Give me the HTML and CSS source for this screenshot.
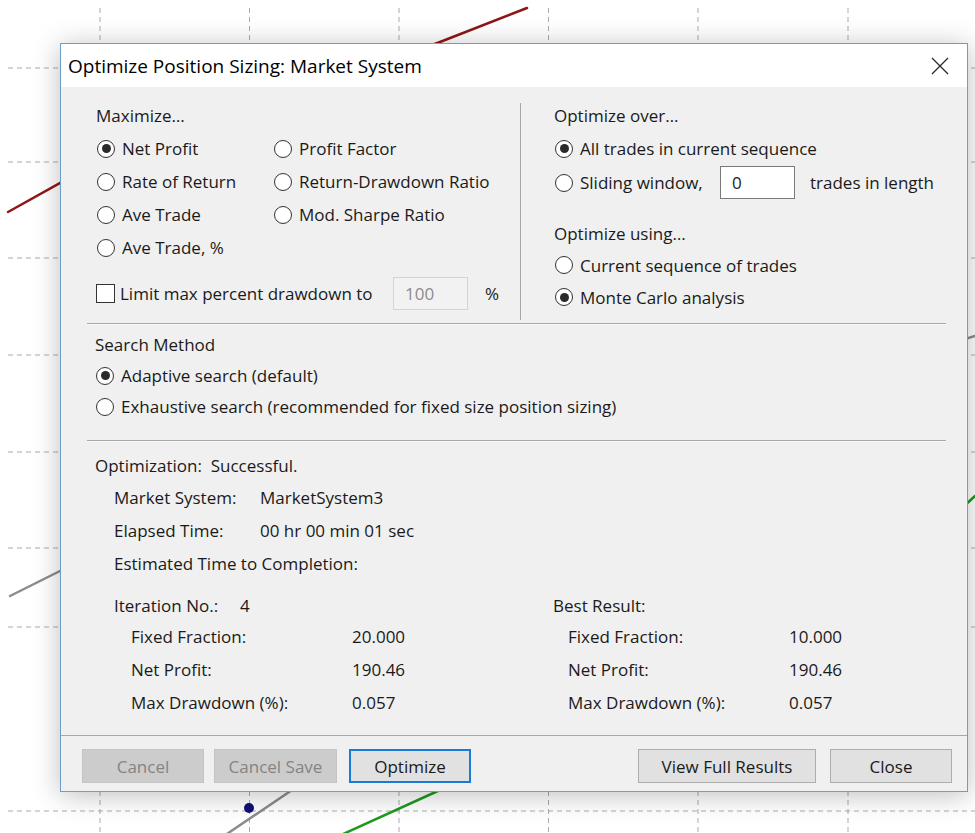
FILE: index.html
```html
<!DOCTYPE html>
<html lang="en">
<head>
<meta charset="utf-8">
<title>Optimize Position Sizing</title>
<link rel="stylesheet" href="styles.css">
</head>
<body>
<div class="desk">
  <!-- equity chart behind the dialog -->
  <svg class="chart" width="975" height="833" viewBox="0 0 975 833">
    <g class="grid">
      <line x1="100" y1="8" x2="100" y2="833"/>
      <line x1="249.5" y1="8" x2="249.5" y2="833"/>
      <line x1="399" y1="8" x2="399" y2="833"/>
      <line x1="548.5" y1="8" x2="548.5" y2="833"/>
      <line x1="698" y1="8" x2="698" y2="833"/>
      <line x1="848" y1="8" x2="848" y2="833"/>
      <line x1="8" y1="68" x2="975" y2="68"/>
      <line x1="8" y1="162" x2="975" y2="162"/>
      <line x1="8" y1="258" x2="975" y2="258"/>
      <line x1="8" y1="355" x2="975" y2="355"/>
      <line x1="8" y1="452" x2="975" y2="452"/>
      <line x1="8" y1="548" x2="975" y2="548"/>
      <line x1="8" y1="627" x2="975" y2="627"/>
      <line x1="8" y1="811" x2="975" y2="811"/>
    </g>
    <polyline class="series red" points="8,212 62,182 440,42 527,8"/>
    <polyline class="series gray" points="10,596 62,570"/>
    <polyline class="series gray" points="218,840 292,790"/>
    <polyline class="series gray" points="962,345 968,338 975,336"/>
    <polyline class="series green" points="330,840 440,790"/>
    <polyline class="series green" points="962,508 975,496"/>
    <circle class="marker" cx="249" cy="808" r="5"/>
  </svg>

  <section class="dialog">
    <header class="titlebar">
      <span class="title">Optimize Position Sizing: Market System</span>
      <svg class="close" width="18" height="18" viewBox="0 0 18 18">
        <path d="M1 1 L17 17 M17 1 L1 17"/>
      </svg>
    </header>

    <div class="content">
      <div class="top">
        <div class="col-left">
          <div class="group-label">Maximize…</div>
          <div class="radio-grid">
            <label class="opt"><span class="radio on"></span>Net Profit</label>
            <label class="opt"><span class="radio"></span>Profit Factor</label>
            <label class="opt"><span class="radio"></span>Rate of Return</label>
            <label class="opt"><span class="radio"></span>Return-Drawdown Ratio</label>
            <label class="opt"><span class="radio"></span>Ave Trade</label>
            <label class="opt"><span class="radio"></span>Mod. Sharpe Ratio</label>
            <label class="opt"><span class="radio"></span>Ave Trade, %</label>
          </div>
          <div class="limit-row">
            <label class="opt limit-label"><span class="check"></span>Limit max percent drawdown to</label>
            <span class="field disabled">100</span>
            <span class="pct">%</span>
          </div>
        </div>

        <div class="vsep"></div>

        <div class="col-right">
          <div class="group-label">Optimize over…</div>
          <label class="opt row-a"><span class="radio on"></span>All trades in current sequence</label>
          <div class="opt row-b">
            <span class="radio"></span>
            <span class="slide-label">Sliding window,</span>
            <span class="field">0</span>
            <span class="after-field">trades in length</span>
          </div>
          <div class="group-label using">Optimize using…</div>
          <label class="opt row-c"><span class="radio"></span>Current sequence of trades</label>
          <label class="opt row-c"><span class="radio on"></span>Monte Carlo analysis</label>
        </div>
      </div>

      <div class="sep"></div>

      <div class="search">
        <div class="group-label">Search Method</div>
        <label class="opt"><span class="radio on"></span>Adaptive search (default)</label>
        <label class="opt"><span class="radio"></span>Exhaustive search (recommended for fixed size position sizing)</label>
      </div>

      <div class="sep"></div>

      <div class="status">
        <div class="status-line">Optimization:&nbsp; Successful.</div>
        <div class="info">
          <div class="info-row"><span>Market System:</span><span>MarketSystem3</span></div>
          <div class="info-row"><span>Elapsed Time:</span><span>00 hr 00 min 01 sec</span></div>
          <div class="info-row"><span>Estimated Time to Completion:</span></div>
        </div>
        <div class="results">
          <div class="result-block">
            <div class="block-head iter"><span>Iteration No.:</span><span>4</span></div>
            <div class="kv"><span>Fixed Fraction:</span><span>20.000</span></div>
            <div class="kv"><span>Net Profit:</span><span>190.46</span></div>
            <div class="kv"><span>Max Drawdown (%):</span><span>0.057</span></div>
          </div>
          <div class="result-block best">
            <div class="block-head"><span>Best Result:</span></div>
            <div class="kv"><span>Fixed Fraction:</span><span>10.000</span></div>
            <div class="kv"><span>Net Profit:</span><span>190.46</span></div>
            <div class="kv"><span>Max Drawdown (%):</span><span>0.057</span></div>
          </div>
        </div>
      </div>
    </div>

    <footer class="footer">
      <div class="btn-group">
        <button class="btn" disabled>Cancel</button>
        <button class="btn save" disabled>Cancel Save</button>
        <button class="btn default">Optimize</button>
      </div>
      <div class="btn-group right">
        <button class="btn wide">View Full Results</button>
        <button class="btn close-btn">Close</button>
      </div>
    </footer>
  </section>
</div>
</body>
</html>
```

FILE: styles.css
```css
html, body {
  margin: 0;
  padding: 0;
  background: #fff;
}

.desk {
  position: relative;
  width: 975px;
  height: 833px;
  overflow: hidden;
  background: #fff;
  font-family: "Open Sans", "Noto Sans", sans-serif;
  font-size: 17px;
  color: #1a1a1a;
}

/* chart canvas */
.chart {
  position: absolute;
  left: 0;
  top: 0;
}

.grid line {
  stroke: #ababab;
  stroke-width: 1;
  stroke-dasharray: 5 4;
}

.series {
  fill: none;
  stroke-width: 2.5;
  stroke-linecap: round;
}

.series.red { stroke: #8e1616; }
.series.gray { stroke: #8c8c8c; }
.series.green { stroke: #1e9a1e; }

.marker { fill: #10107a; }

/* dialog window */
.dialog {
  position: absolute;
  left: 60px;
  top: 43px;
  width: 908px;
  height: 749px;
  box-sizing: border-box;
  border: 1px solid #6c9dcb;
  background: #f0f0f0;
  box-shadow: 0 3px 26px rgba(0, 0, 0, 0.26);
  display: flex;
  flex-direction: column;
}

.titlebar {
  height: 43px;
  flex: none;
  background: #fff;
  display: flex;
  align-items: center;
  justify-content: space-between;
  padding: 0 18px 0 7px;
}

.title {
  font-size: 19px;
  color: #000;
  padding-top: 1px;
}

.close path {
  stroke: #2b2b2b;
  stroke-width: 1.3;
  fill: none;
}

.content {
  flex: 1;
  min-height: 0;
  display: flex;
  flex-direction: column;
  padding: 0 21px 0 26px;
}

.group-label {
  height: 33px;
  display: flex;
  align-items: center;
}

.opt {
  display: flex;
  align-items: center;
  gap: 7px;
  white-space: nowrap;
}

.radio {
  flex: none;
  width: 18px;
  height: 18px;
  box-sizing: border-box;
  border: 1.5px solid #333;
  border-radius: 50%;
  background: #fff;
  display: grid;
  place-items: center;
  margin-left: 1px;
}

.radio.on::after {
  content: "";
  width: 9px;
  height: 9px;
  border-radius: 50%;
  background: #2a2a2a;
}

.check {
  flex: none;
  width: 19px;
  height: 19px;
  box-sizing: border-box;
  border: 1.5px solid #333;
  background: #fff;
  margin-right: -1px;
}

.field {
  box-sizing: border-box;
  width: 75px;
  height: 33px;
  border: 1px solid #7a7a7a;
  background: #fff;
  display: flex;
  align-items: center;
  padding-left: 11px;
  flex: none;
}

.field.disabled {
  border-color: #d4d4d4;
  background: #f2f2f2;
  color: #8c8c8c;
}

/* upper options area */
.top {
  height: 236px;
  flex: none;
  display: grid;
  grid-template-columns: 433px 1px 1fr;
}

.col-left {
  padding: 12px 0 0 9px;
}

.radio-grid {
  display: grid;
  grid-template-columns: 177px auto;
  grid-auto-rows: 33px;
}

.limit-row {
  margin-top: 13px;
  height: 33px;
  display: flex;
  align-items: center;
}

.limit-label {
  width: 297px;
  gap: 6px;
}

.pct {
  margin-left: 17px;
}

.vsep {
  margin: 16px 0 3px;
  background: #a8a8a8;
}

.col-right {
  padding: 12px 0 0 33px;
}

.row-a { height: 33px; }

.row-b { height: 35px; }

.slide-label { width: 133px; }

.after-field { margin-left: 8px; }

.using {
  margin-top: 17px;
  height: 32px;
}

.row-c { height: 32px; }

.sep {
  flex: none;
  height: 1px;
  background: #a8a8a8;
  border-bottom: 1px solid #fafafa;
}

/* search method */
.search {
  padding: 3px 0 18px 8px;
}

.search .group-label { height: 32px; }

.search .opt { height: 31px; }

/* status area */
.status {
  flex: 1;
  padding: 7px 0 0 8px;
  white-space: nowrap;
}

.status-line {
  height: 32px;
  display: flex;
  align-items: center;
}

.info {
  padding-left: 19px;
}

.info-row {
  height: 33px;
  display: grid;
  grid-template-columns: 146px auto;
  align-items: center;
}

.results {
  margin-top: 10px;
  padding-left: 19px;
  display: grid;
  grid-template-columns: 439px auto;
}

.block-head {
  height: 30px;
  display: flex;
  align-items: center;
}

.block-head.iter {
  display: grid;
  grid-template-columns: 126px auto;
}

.kv {
  height: 33px;
  display: grid;
  grid-template-columns: 221px auto;
  align-items: center;
  padding-left: 17px;
}

.best .kv { padding-left: 15px; }

/* bottom button bar */
.footer {
  flex: none;
  box-sizing: border-box;
  height: 56px;
  border-top: 1px solid #a8a8a8;
  display: flex;
  justify-content: space-between;
  align-items: flex-start;
  padding: 13px 15px 0 21px;
}

.btn-group {
  display: flex;
  gap: 10px;
}

.btn-group.right { gap: 14px; }

.btn {
  box-sizing: border-box;
  width: 122px;
  height: 34px;
  font: inherit;
  color: #1a1a1a;
  background: #e1e1e1;
  border: 1px solid #adadad;
  padding: 0;
}

.btn.save { width: 123px; }

.btn.default {
  border: 2px solid #1a7bd6;
  margin-left: 2px;
}

.btn:disabled {
  background: #cccccc;
  border-color: #c4c4c4;
  color: #848484;
}

.btn.wide { width: 178px; }
```
